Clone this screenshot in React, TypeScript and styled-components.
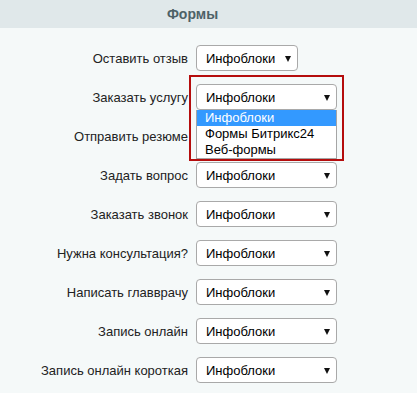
import React from 'react'
import styled, { createGlobalStyle } from 'styled-components'

interface SelectProps {
  wide?: boolean
}

const GlobalStyle = createGlobalStyle`
  body {
    margin: 0;
    background: #f5f9f9;
    font-family: 'Liberation Sans', Arial, sans-serif;
  }
`

const Page = styled.div`
  width: 417px;
  height: 393px;
  overflow: hidden;
  background: #f5f9f9;
`

const Header = styled.div`
  height: 28px;
  display: flex;
  align-items: center;
  justify-content: center;
  padding-right: 32px;
  background: #e0e8ea;
  font-size: 14px;
  font-weight: bold;
  color: #4e6267;
`

const FormList = styled.div`
  display: flex;
  flex-direction: column;
  gap: 13px;
  padding-top: 17px;
`

const Row = styled.div`
  display: grid;
  grid-template-columns: 188px auto;
  column-gap: 8px;
  align-items: center;
  height: 26px;
`

const Label = styled.span`
  text-align: right;
  font-size: 13px;
  color: #222;
`

const SelectBox = styled.div<SelectProps>`
  position: relative;
  box-sizing: border-box;
  width: ${props => (props.wide ? '141px' : '102px')};
  height: 26px;
  display: flex;
  align-items: center;
  padding-left: 9px;
  background: #fff;
  border: 1px solid #a9a9a9;
  border-radius: 4px;
  font-size: 13px;
  color: #000;
`

const Arrow = styled.span`
  position: absolute;
  right: 6px;
  top: 10px;
  width: 0;
  height: 0;
  border-left: 3.5px solid transparent;
  border-right: 3.5px solid transparent;
  border-top: 6px solid #111;
`

const OpenHolder = styled.div`
  position: relative;
  width: 141px;
  height: 26px;
`

const Highlight = styled.div`
  position: absolute;
  left: -7px;
  top: -9px;
  width: 155px;
  height: 86px;
  box-sizing: border-box;
  border: 2px solid #b50d0d;
  pointer-events: none;
  z-index: 3;
`

const Options = styled.ul`
  position: absolute;
  left: 0;
  top: 26px;
  z-index: 2;
  box-sizing: border-box;
  width: 141px;
  margin: 0;
  padding: 0;
  list-style: none;
  background: #fff;
  border: 1px solid #a5a5a5;
  border-top: none;
`

const Option = styled.li<{ active?: boolean }>`
  height: 16px;
  line-height: 16px;
  padding-left: 8px;
  font-size: 13px;
  color: ${props => (props.active ? '#fff' : '#000')};
  background: ${props => (props.active ? '#3399ff' : 'transparent')};
`

const rows = [
  'Оставить отзыв',
  'Заказать услугу',
  'Отправить резюме',
  'Задать вопрос',
  'Заказать звонок',
  'Нужна консультация?',
  'Написать главврачу',
  'Запись онлайн',
  'Запись онлайн короткая',
]

const options = ['Инфоблоки', 'Формы Битрикс24', 'Веб-формы']

const App: React.FC = () => {
  return (
    <Page>
      <GlobalStyle />
      <Header>Формы</Header>
      <FormList>
        {rows.map((label, i) => (
          <Row key={label}>
            <Label>{label}</Label>
            {i === 1 ? (
              <OpenHolder>
                <SelectBox wide>
                  Инфоблоки
                  <Arrow />
                </SelectBox>
                <Options>
                  {options.map((opt, j) => (
                    <Option key={opt} active={j === 0}>{opt}</Option>
                  ))}
                </Options>
                <Highlight />
              </OpenHolder>
            ) : (
              <SelectBox wide={i !== 0}>
                Инфоблоки
                <Arrow />
              </SelectBox>
            )}
          </Row>
        ))}
      </FormList>
    </Page>
  )
}

export default App
